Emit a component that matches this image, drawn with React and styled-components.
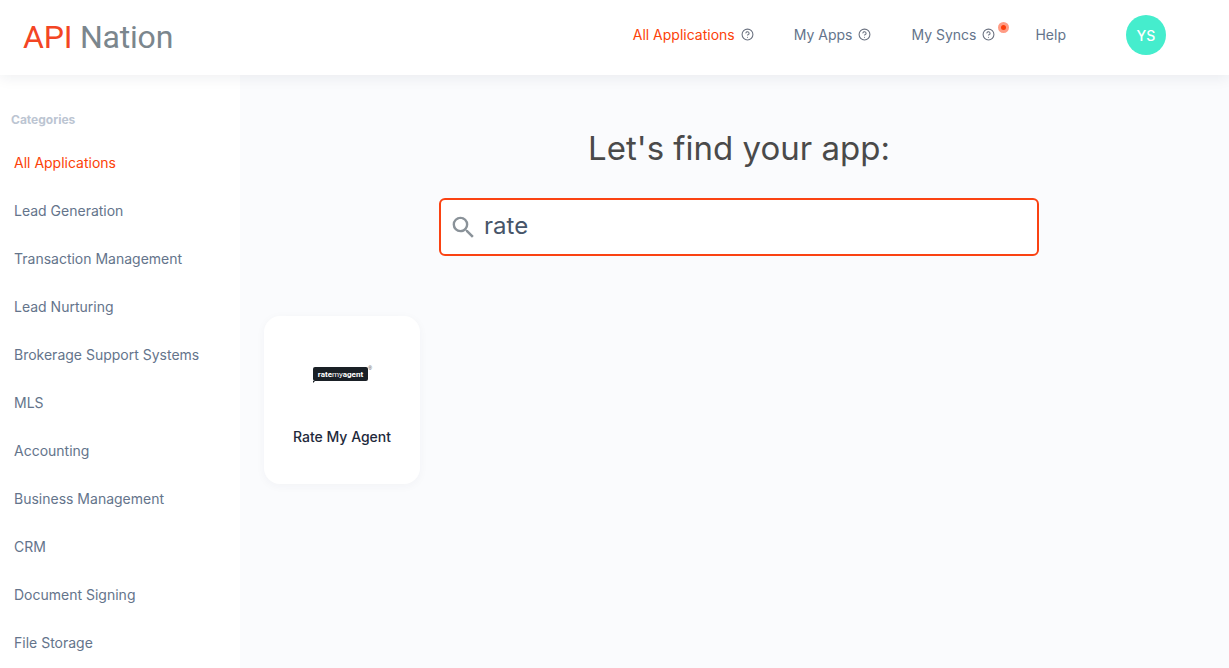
import React from 'react';
import styled, { createGlobalStyle } from 'styled-components';
import { CircleHelp } from 'lucide-react';
import { MdSearch } from 'react-icons/md';

const GlobalStyle = createGlobalStyle`
  html, body {
    margin: 0;
    height: 100%;
    overflow: hidden;
    font-family: Inter, "Liberation Sans", sans-serif;
    background: #fafbfd;
  }
`;

const Page = styled.div`
  height: 668px;
  display: flex;
  flex-direction: column;
  overflow: hidden;
`;

const Header = styled.header`
  position: relative;
  z-index: 2;
  flex: none;
  box-sizing: border-box;
  height: 75px;
  padding-bottom: 5px;
  display: flex;
  align-items: center;
  background: #fff;
  box-shadow: 0 2px 14px rgba(30, 40, 60, 0.08);
`;

const Logo = styled.div`
  margin-left: 23px;
  margin-top: 3px;
  font-family: Roboto, sans-serif;
  font-size: 32px;
  line-height: 1;
  letter-spacing: -0.2px;
  color: #7b868d;
  white-space: nowrap;

  span {
    color: #f34524;
  }
`;

const Nav = styled.nav`
  margin-left: auto;
  margin-right: 63px;
  display: flex;
  align-items: center;
  height: 100%;
`;

const NavItem = styled.a`
  position: relative;
  display: flex;
  align-items: center;
  gap: 6px;
  margin-right: ${props => props.gap}px;
  margin-bottom: 2px;
  font-size: 14px;
  color: ${props => (props.active ? '#fc4208' : '#64748b')};
  white-space: nowrap;

  svg {
    color: #6b7280;
    margin-right: -1px;
  }
`;

const Dot = styled.i`
  position: absolute;
  top: -4px;
  right: -15px;
  width: 5px;
  height: 5px;
  border: 3px solid #ff9c85;
  border-radius: 50%;
  background: #fc3d0a;
`;

const Avatar = styled.div`
  width: 40px;
  height: 40px;
  border-radius: 50%;
  display: flex;
  align-items: center;
  justify-content: center;
  background: #45edcd;
  color: #fff;
  font-size: 14px;
  font-weight: 500;
`;

const Body = styled.div`
  flex: 1;
  display: flex;
  min-height: 0;
`;

const Sidebar = styled.aside`
  flex: none;
  width: 240px;
  background: #fff;
  padding-top: 37px;
  box-sizing: border-box;
`;

const SideTitle = styled.div`
  margin-left: 11px;
  margin-bottom: 11px;
  font-size: 12px;
  line-height: 15px;
  font-weight: 700;
  color: #bcc5d2;
`;

const SideItem = styled.div`
  height: 48px;
  display: flex;
  align-items: center;
  padding-left: 14px;
  font-size: 14px;
  color: ${props => (props.active ? '#fc4208' : '#64748b')};
`;

const Main = styled.main`
  flex: 1;
  padding: 0 15px 0 24px;
  background: #fafbfd;
`;

const Finder = styled.div`
  display: flex;
  flex-direction: column;
  align-items: center;
`;

const Heading = styled.h1`
  margin: 52px 0 0;
  font-size: 33px;
  line-height: 42px;
  font-weight: 400;
  color: #4a4a4a;
`;

const SearchBox = styled.div`
  box-sizing: border-box;
  width: 600px;
  height: 58px;
  margin-top: 29px;
  padding-bottom: 3px;
  display: flex;
  align-items: center;
  gap: 6px;
  padding-left: 8px;
  background: #fff;
  border: 2px solid #fa4212;
  border-radius: 6px;
  font-size: 24px;
  color: #475569;

  svg {
    color: #8a9299;
    margin-top: 4px;
  }
`;

const Grid = styled.div`
  margin-top: 60px;
  display: flex;
`;

const AppCard = styled.div`
  box-sizing: border-box;
  width: 156px;
  height: 168px;
  display: flex;
  flex-direction: column;
  align-items: center;
  background: #fff;
  border-radius: 16px;
  box-shadow: 0 2px 10px rgba(40, 50, 80, 0.04);
`;

const BrandRow = styled.div`
  position: relative;
  margin-top: 51px;
  margin-right: 3px;
`;

const Brand = styled.div`
  position: relative;
  width: 55px;
  height: 14px;
  display: flex;
  align-items: center;
  justify-content: center;
  background: #1a2026;
  border-radius: 2px;
  color: #fff;
  font-family: Roboto, sans-serif;
  font-size: 8px;
  font-weight: 700;

  &::after {
    content: '';
    position: absolute;
    left: 0;
    bottom: -2px;
    border-left: 2px solid #1a2026;
    border-bottom: 2px solid transparent;
  }

  span {
    font-weight: 400;
  }
`;

const Registered = styled.span`
  position: absolute;
  top: -1px;
  right: -4px;
  font-family: "Liberation Sans", sans-serif;
  font-size: 5px;
  line-height: 5px;
  color: #444;
`;

const AppName = styled.div`
  margin-top: 47px;
  font-size: 14px;
  line-height: 18px;
  font-weight: 500;
  color: #1e293b;
`;

const categories = [
  'All Applications',
  'Lead Generation',
  'Transaction Management',
  'Lead Nurturing',
  'Brokerage Support Systems',
  'MLS',
  'Accounting',
  'Business Management',
  'CRM',
  'Document Signing',
  'File Storage',
];

export default function App() {
  return (
    <Page>
      <GlobalStyle />
      <Header>
        <Logo><span>API</span> Nation</Logo>
        <Nav>
          <NavItem active gap={41}>All Applications <CircleHelp size={13} strokeWidth={2} /></NavItem>
          <NavItem gap={41}>My Apps <CircleHelp size={13} strokeWidth={2} /></NavItem>
          <NavItem gap={41}>My Syncs <CircleHelp size={13} strokeWidth={2} /><Dot /></NavItem>
          <NavItem gap={60}>Help</NavItem>
          <Avatar>YS</Avatar>
        </Nav>
      </Header>
      <Body>
        <Sidebar>
          <SideTitle>Categories</SideTitle>
          {categories.map((name, i) => (
            <SideItem key={name} active={i === 0}>{name}</SideItem>
          ))}
        </Sidebar>
        <Main>
          <Finder>
            <Heading>Let's find your app:</Heading>
            <SearchBox>
              <MdSearch size={29} />
              rate
            </SearchBox>
          </Finder>
          <Grid>
            <AppCard>
              <BrandRow>
                <Brand>rate<span>my</span>agent</Brand>
                <Registered>®</Registered>
              </BrandRow>
              <AppName>Rate My Agent</AppName>
            </AppCard>
          </Grid>
        </Main>
      </Body>
    </Page>
  );
}
